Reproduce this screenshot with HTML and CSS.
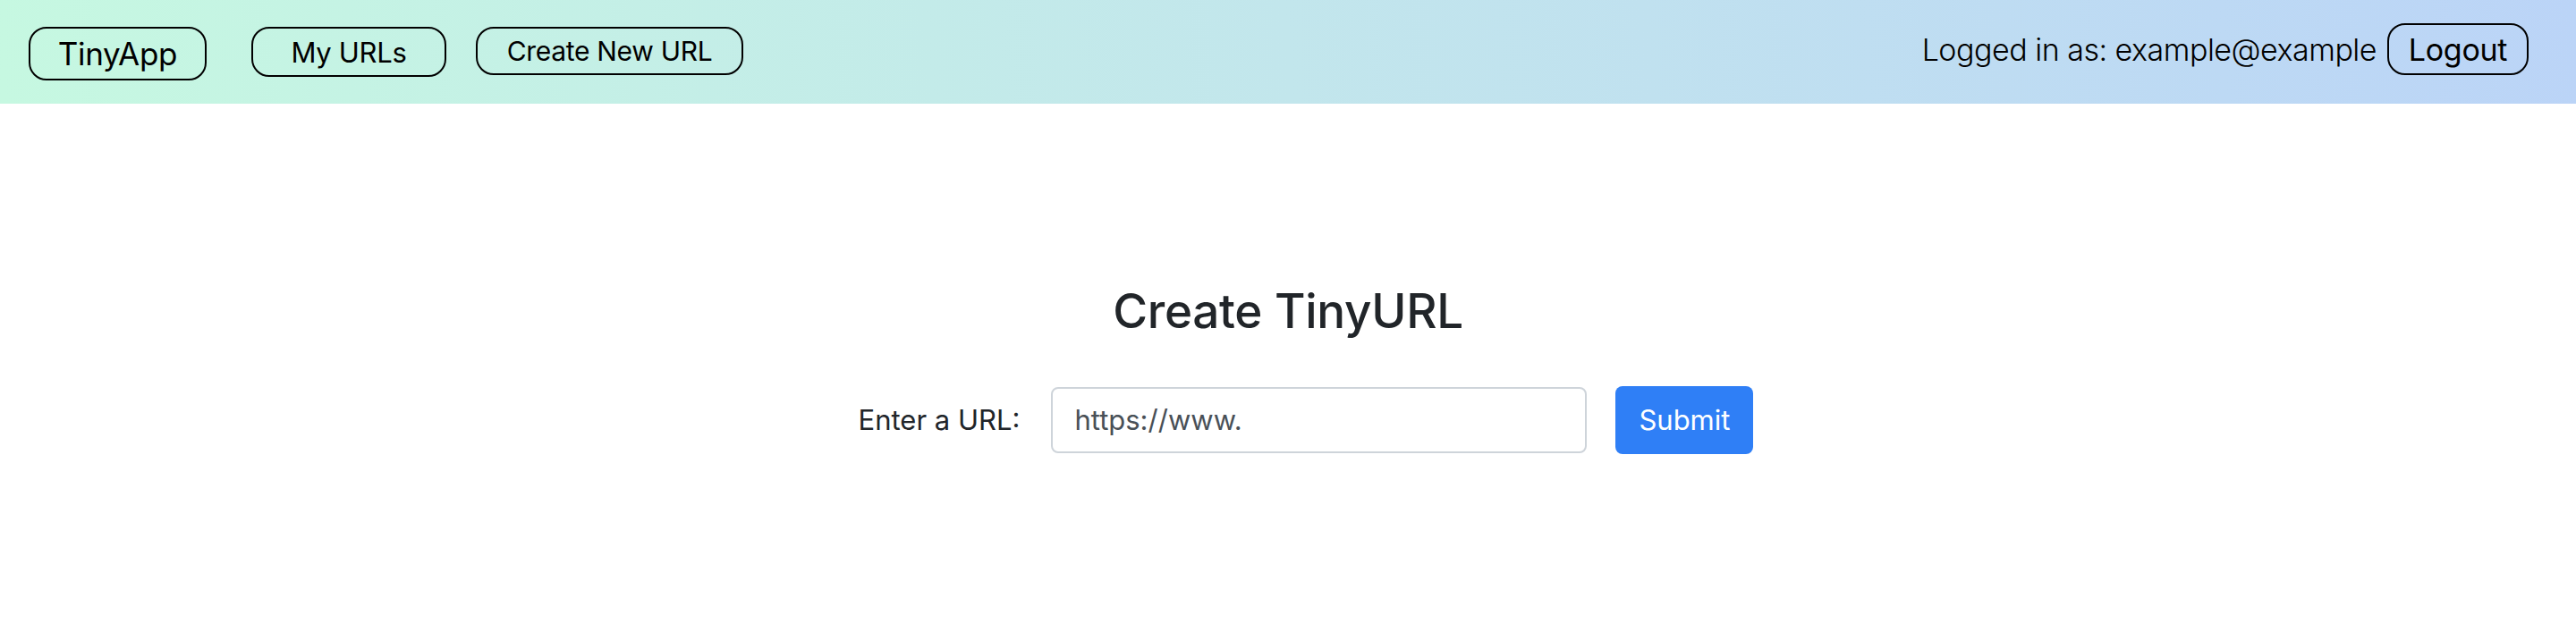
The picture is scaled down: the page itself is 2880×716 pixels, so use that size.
FILE: index.html
```html
<!DOCTYPE html>
<html lang="en">
<head>
<meta charset="utf-8">
<title>TinyApp</title>
<link rel="stylesheet" href="styles.css">
</head>
<body>
<nav class="topbar">
  <div class="nav-left">
    <a class="pill pill-brand" href="#">TinyApp</a>
    <a class="pill pill-urls" href="#">My URLs</a>
    <a class="pill pill-new" href="#">Create New URL</a>
  </div>
  <div class="nav-right">
    <span class="user">Logged in as: example@example</span>
    <button class="pill pill-logout" type="button">Logout</button>
  </div>
</nav>
<main class="content">
  <h1 class="title">Create TinyURL</h1>
  <form class="url-form">
    <label class="url-label" for="longURL">Enter a URL:</label>
    <input class="url-input" id="longURL" type="text" value="https://www.">
    <button class="submit" type="submit">Submit</button>
  </form>
</main>
</body>
</html>
```

FILE: styles.css
```css
html, body {
  margin: 0;
  padding: 0;
  background: #ffffff;
}
body {
  font-family: Inter, "Noto Sans", "Liberation Sans", sans-serif;
  color: #212529;
}
.topbar {
  height: 116px;
  box-sizing: border-box;
  padding: 0 53px 0 32px;
  display: flex;
  align-items: center;
  justify-content: space-between;
  background: linear-gradient(85deg, #c6f8e1 0%, #c2e6ec 50%, #bbd4f7 100%);
}
.nav-left {
  display: flex;
  align-items: center;
}
.nav-right {
  display: flex;
  align-items: center;
  gap: 12px;
  margin-top: -6px;
}
.pill {
  box-sizing: border-box;
  display: flex;
  align-items: center;
  justify-content: center;
  border: 2px solid #000;
  border-radius: 20px;
  background: transparent;
  color: #000;
  text-decoration: none;
  font-family: Inter, "Noto Sans", sans-serif;
  font-weight: 400;
  letter-spacing: -0.3px;
}
.pill-brand {
  width: 199px;
  height: 60px;
  font-size: 35px;
  margin-top: 4px;
}
.pill-urls {
  width: 218px;
  height: 56px;
  font-size: 31px;
  margin-left: 50px;
}
.pill-new {
  width: 299px;
  height: 54px;
  font-size: 30px;
  margin-left: 33px;
  margin-top: -2px;
}
.pill-logout {
  width: 158px;
  height: 58px;
  font-size: 34px;
  padding: 0;
}
.user {
  font-size: 34px;
  font-weight: 300;
  color: #000;
  letter-spacing: -0.5px;
}
.content {
  padding-top: 201px;
  display: flex;
  flex-direction: column;
  align-items: center;
}
.title {
  margin: 0 0 51px;
  font-size: 53px;
  font-weight: 500;
  line-height: 1.2;
  color: #212529;
  letter-spacing: -0.3px;
}
.url-form {
  display: flex;
  align-items: center;
  padding-left: 40px;
}
.url-label {
  font-size: 31px;
  color: #212529;
  margin-right: 35px;
}
.url-input {
  box-sizing: border-box;
  width: 599px;
  height: 74px;
  padding: 0 24px;
  border: 2px solid #ced4da;
  border-radius: 8px;
  font-family: Inter, "Noto Sans", sans-serif;
  font-size: 31px;
  color: #495057;
  background: #fff;
  outline: none;
}
.submit {
  box-sizing: border-box;
  width: 154px;
  height: 76px;
  margin-left: 32px;
  border: none;
  border-radius: 8px;
  background: #2f7ff6;
  color: #fff;
  font-family: Inter, "Noto Sans", sans-serif;
  font-size: 31px;
  font-weight: 400;
}
```
